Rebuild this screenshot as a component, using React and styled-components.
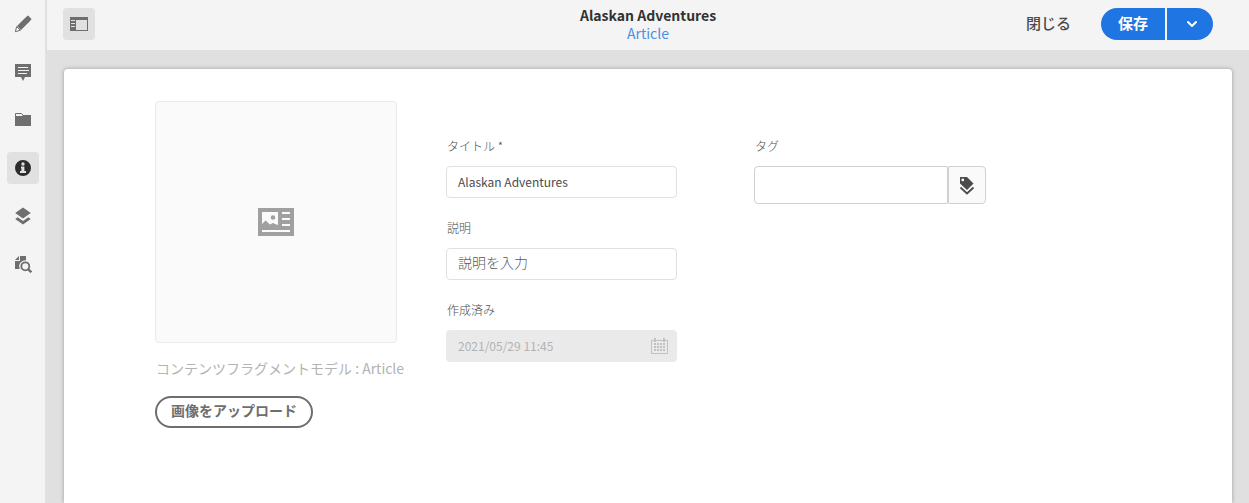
import React from 'react';
import styled, { createGlobalStyle, css } from 'styled-components';

const GlobalStyle = createGlobalStyle`
  * { box-sizing: border-box; }
  body {
    margin: 0;
    background: #e0e0e0;
    font-family: "Noto Sans CJK JP", sans-serif;
    font-size: 14px;
    line-height: 20px;
    color: #4b4b4b;
  }
  button, input { font: inherit; color: inherit; margin: 0; }
  button { cursor: pointer; }
`;

const Shell = styled.div`
  display: flex;
  min-height: 100vh;
`;

const Rail = styled.nav`
  flex: none;
  width: 47px;
  padding: 8px 7px;
  display: flex;
  flex-direction: column;
  gap: 16px;
  background: #f4f4f4;
  border-right: 2px solid #e0e0e0;
`;

const IconButton = styled.button`
  width: 32px;
  height: 32px;
  flex: none;
  padding: 0;
  border: 0;
  border-radius: 4px;
  display: flex;
  align-items: center;
  justify-content: center;
  background: ${(p) => (p.$active ? '#e1e1e1' : 'transparent')};
  color: ${(p) => (p.$dark ? '#2c2c2c' : '#6e6e6e')};
`;

const Content = styled.div`
  flex: 1;
  min-width: 0;
  display: flex;
  flex-direction: column;
`;

const Header = styled.header`
  height: 50px;
  padding: 0 16px 2px;
  display: grid;
  grid-template-columns: 1fr auto 1fr;
  align-items: center;
  background: #f4f4f4;
`;

const Heading = styled.div`
  text-align: center;
  line-height: 18px;
`;

const Title = styled.h1`
  margin: 0;
  font-size: 14px;
  line-height: 18px;
  font-weight: 700;
  color: #323232;
`;

const ModelLink = styled.a`
  display: block;
  color: #4a90e2;
  text-decoration: none;
`;

const Actions = styled.div`
  display: flex;
  justify-content: flex-end;
  align-items: center;
  padding-right: 20px;
`;

const CloseButton = styled.button`
  border: 0;
  background: none;
  padding: 0 30px 2px;
  height: 32px;
  font-size: 15px;
  font-weight: 500;
`;

const SaveGroup = styled.div`
  display: flex;
  gap: 2px;
`;

const SaveButton = styled.button`
  height: 32px;
  border: 0;
  background: #1f76e3;
  color: #fff;
  font-size: 15px;
  font-weight: 700;
  display: flex;
  align-items: center;
  justify-content: center;
  ${(p) =>
    p.$menu
      ? css`width: 46px; padding: 0 0 0 4px; border-radius: 0 16px 16px 0;`
      : css`width: 64px; padding: 0 0 2px; border-radius: 16px 0 0 16px;`}
`;

const Card = styled.main`
  flex: 1;
  margin: 19px 17px 0;
  padding: 32px 91px;
  display: flex;
  align-items: flex-start;
  background: #fff;
  border-radius: 4px 4px 0 0;
  box-shadow: 0 0 4px rgba(0, 0, 0, 0.3);
`;

const Media = styled.section`
  flex: none;
  width: 291px;
  display: flex;
  flex-direction: column;
  align-items: flex-start;
`;

const Thumbnail = styled.div`
  width: 242px;
  height: 242px;
  border: 1px solid #eaeaea;
  border-radius: 4px;
  background: #fafafa;
  display: flex;
  align-items: center;
  justify-content: center;
`;

const ModelNote = styled.p`
  margin: 15px 0 17px 1px;
  line-height: 21px;
  white-space: nowrap;
  color: #b3b3b3;
`;

const UploadButton = styled.button`
  height: 32px;
  padding: 0 14px 4px;
  border: 2px solid #6e6e6e;
  border-radius: 16px;
  background: #fff;
  color: #6e6e6e;
  font-weight: 700;
`;

const Fields = styled.form`
  display: flex;
  gap: 77px;
  padding-top: 35px;
`;

const Column = styled.div`
  width: ${(p) => (p.$wide ? '232px' : '231px')};
  display: flex;
  flex-direction: column;
  gap: 20px;
`;

const Field = styled.div`
  display: flex;
  flex-direction: column;
  gap: 10px;
`;

const Label = styled.label`
  padding-left: 1px;
  font-size: 12px;
  font-weight: 300;
  color: #4b4b4b;
`;

const InputWrap = styled.div`
  height: 32px;
  display: flex;
  align-items: center;
  border: 1px solid ${(p) => (p.$disabled ? '#eaeaea' : '#e1e1e1')};
  border-radius: 4px;
  background: ${(p) => (p.$disabled ? '#eaeaea' : '#fff')};
  padding: 0 8px 0 11px;
`;

const TextInput = styled.input`
  flex: 1;
  min-width: 0;
  height: 30px;
  padding: 0 0 2px;
  border: 0;
  background: none;
  outline: none;
  font-size: ${(p) => (p.$small ? '12px' : '14px')};
  &::placeholder {
    color: #5a5a5a;
    font-weight: 300;
    opacity: 1;
  }
  &:placeholder-shown { padding-bottom: 4px; }
  &:disabled { color: #b3b3b3; }
`;

const TagRow = styled.div`
  display: flex;
  height: 38px;
`;

const TagInput = styled.input`
  flex: 1;
  min-width: 0;
  border: 1px solid #d0d0d0;
  border-radius: 4px 0 0 4px;
  background: #fff;
  padding: 0 11px;
`;

const TagButton = styled.button`
  width: 38px;
  padding: 2px 0 0;
  border: 1px solid #d0d0d0;
  border-radius: 2px 4px 4px 2px;
  background: #fafafa;
  display: flex;
  align-items: center;
  justify-content: center;
`;

const Svg = ({ w = 18, h = 18, children }) => (
  <svg width={w} height={h} viewBox={`0 0 ${w} ${h}`} fill="currentColor" aria-hidden="true">
    {children}
  </svg>
);

const PencilIcon = () => (
  <Svg>
    <path d="M11.3 2.7 13.2.9a1 1 0 0 1 1.4 0l2.5 2.5a1 1 0 0 1 0 1.4l-1.8 1.9L7 15 3 11z" />
    <path d="M2.7 11.6 6.4 15.3 1.3 16.7z" fill="none" stroke="currentColor" />
  </Svg>
);

const CommentIcon = () => (
  <Svg>
    <path fillRule="evenodd" d="M1 1h16v13h-6l-2 4-2-4H1zM4 4v1h10V4zm0 3v1h11V7zm0 3v1h9v-1z" />
  </Svg>
);

const FolderIcon = () => (
  <Svg>
    <path d="M1 5h7l1-1h8v11H1z" />
    <path d="M1.5 5V2.5h6L9 4.2" fill="none" stroke="currentColor" />
  </Svg>
);

const InfoIcon = () => (
  <Svg>
    <path fillRule="evenodd" d="M9 1a8 8 0 1 0 0 16A8 8 0 0 0 9 1zm0 2.3a1.7 1.7 0 1 1 0 3.4 1.7 1.7 0 0 1 0-3.4zM7 7.5h3.4V12H12v2H6v-2h1.4V9.3H7z" />
  </Svg>
);

const LayersIcon = () => (
  <Svg>
    <path d="M9 .5 16.8 6 9 11.5 1.2 6z" />
    <path d="m3.7 10.2 5.3 3.7 5.3-3.7 2.5 1.8L9 17.5 1.2 12z" />
  </Svg>
);

const PageSearchIcon = () => (
  <Svg>
    <path d="M5 1v4H1zM6 1h6v4.4A6 6 0 0 0 5.8 14H1V6h5z" />
    <circle cx="11.3" cy="11.3" r="4" fill="none" stroke="currentColor" strokeWidth="1.8" />
    <path d="m14.3 14.3 3 3" stroke="currentColor" strokeWidth="2.4" />
  </Svg>
);

const PanelIcon = () => (
  <Svg w={18} h={14}>
    <path fillRule="evenodd" d="M0 0h18v14H0zM6 3v10h11V3zM1 3v1h4V3zm0 3v1h4V6zm0 3v1h4V9z" />
  </Svg>
);

const FragmentIcon = () => (
  <svg width="36" height="28" viewBox="0 0 36 28" fill="#a0a0a0" aria-hidden="true">
    <path fillRule="evenodd" d="M0 0h36v28H0zM4 4v13l3.5-4 4 4.5 3-2 5.5 1.5V4zm20 0v2h8V4zm0 6v2h8v-2zm0 6v2h8v-2zM4 22v2h28v-2z" />
    <circle cx="15" cy="9.5" r="2.3" />
    <path d="M4 17.5V16l3.5-3.5L12 16.5l3-1.5 5 2.5z" />
  </svg>
);

const CalendarIcon = () => (
  <svg width="17" height="16" viewBox="0 0 17 16" fill="#c2c2c2" aria-hidden="true">
    <path fillRule="evenodd" d="M0 2h3V0h2v2h7V0h2v2h3v14H0zM1 3v12h15V3h-2v1h-2V3H5v1H3V3z" />
    {[5, 8, 11].map((y) =>
      [3, 6, 9, 12].map((x) => <rect key={`${x}-${y}`} x={x} y={y} width="2" height="2" />)
    )}
  </svg>
);

const TagsIcon = () => (
  <Svg>
    <path fillRule="evenodd" d="M2 0h7l6.5 6.5L9 13 2 6.5zM4.8 1.5a1.4 1.4 0 1 0 0 2.8 1.4 1.4 0 0 0 0-2.8z" />
    <path d="m2.5 10.5 6.5 6 6.5-6" fill="none" stroke="currentColor" strokeWidth="1.8" />
  </Svg>
);

const railItems = [
  ['編集', PencilIcon],
  ['注釈', CommentIcon],
  ['フォルダー', FolderIcon],
  ['プロパティ', InfoIcon],
  ['構造', LayersIcon],
  ['プレビュー', PageSearchIcon],
];

export default function App() {
  return (
    <>
      <GlobalStyle />
      <Shell>
        <Rail>
          {railItems.map(([name, Icon]) => (
            <IconButton
              key={name}
              type="button"
              aria-label={name}
              $active={Icon === InfoIcon}
              $dark={Icon === InfoIcon}
            >
              <Icon />
            </IconButton>
          ))}
        </Rail>
        <Content>
          <Header>
            <IconButton type="button" aria-label="サイドパネル" $active>
              <PanelIcon />
            </IconButton>
            <Heading>
              <Title>Alaskan Adventures</Title>
              <ModelLink href="#model">Article</ModelLink>
            </Heading>
            <Actions>
              <CloseButton type="button">閉じる</CloseButton>
              <SaveGroup>
                <SaveButton type="button">保存</SaveButton>
                <SaveButton type="button" $menu aria-label="保存オプション">
                  <svg width="12" height="8" viewBox="0 0 12 8" fill="none" stroke="#fff" strokeWidth="2" strokeLinecap="round" strokeLinejoin="round" aria-hidden="true">
                    <path d="m2 2 4 4 4-4" />
                  </svg>
                </SaveButton>
              </SaveGroup>
            </Actions>
          </Header>
          <Card>
            <Media>
              <Thumbnail>
                <FragmentIcon />
              </Thumbnail>
              <ModelNote>コンテンツフラグメントモデル : Article</ModelNote>
              <UploadButton type="button">画像をアップロード</UploadButton>
            </Media>
            <Fields>
              <Column>
                <Field>
                  <Label htmlFor="title">タイトル *</Label>
                  <InputWrap>
                    <TextInput $small id="title" defaultValue="Alaskan Adventures" />
                  </InputWrap>
                </Field>
                <Field>
                  <Label htmlFor="description">説明</Label>
                  <InputWrap>
                    <TextInput id="description" placeholder="説明を入力" />
                  </InputWrap>
                </Field>
                <Field>
                  <Label htmlFor="created">作成済み</Label>
                  <InputWrap $disabled>
                    <TextInput $small id="created" defaultValue="2021/05/29 11:45" disabled />
                    <CalendarIcon />
                  </InputWrap>
                </Field>
              </Column>
              <Column $wide>
                <Field>
                  <Label htmlFor="tags">タグ</Label>
                  <TagRow>
                    <TagInput id="tags" />
                    <TagButton type="button" aria-label="タグを選択">
                      <TagsIcon />
                    </TagButton>
                  </TagRow>
                </Field>
              </Column>
            </Fields>
          </Card>
        </Content>
      </Shell>
    </>
  );
}
